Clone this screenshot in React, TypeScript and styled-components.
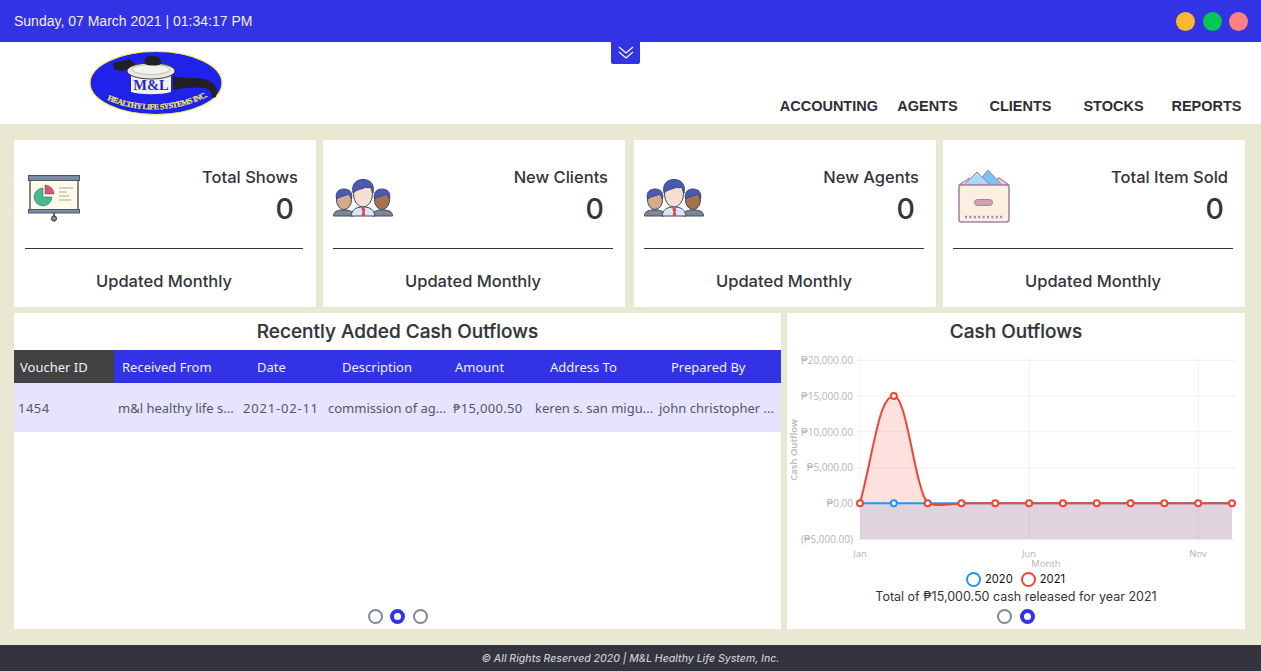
import styled, { createGlobalStyle } from 'styled-components';

const GlobalStyle = createGlobalStyle`
	html, body {
		margin: 0;
		padding: 0;
		background-color: #e9e9d3;
	}
	* {
		box-sizing: border-box;
	}
`;

const Page = styled.div`
	width: 1261px;
	height: 671px;
	display: flex;
	flex-direction: column;
	overflow: hidden;
	font-family: Inter, 'Liberation Sans', sans-serif;
	color: #33343d;
`;

const TopBar = styled.div`
	position: relative;
	height: 42px;
	flex: none;
	background-color: #3333e6;
	display: flex;
	align-items: center;
	justify-content: space-between;
	padding: 0 13px 0 14px;
`;

const Clock = styled.div`
	font-family: 'Liberation Sans', sans-serif;
	font-size: 14px;
	color: #f1efff;
`;

const Lights = styled.div`
	display: flex;
	gap: 7.5px;
`;

const Light = styled.span<{ $color: string }>`
	width: 19px;
	height: 19px;
	border-radius: 50%;
	background-color: ${(props) => props.$color};
`;

const Toggler = styled.button`
	position: absolute;
	left: 611px;
	top: 42px;
	width: 29px;
	height: 22px;
	border: 0;
	padding: 0;
	border-radius: 0 0 2px 2px;
	background-color: #3333e6;
	display: flex;
	align-items: center;
	justify-content: center;
`;

const Header = styled.header`
	height: 82px;
	flex: none;
	background-color: #fff;
	display: flex;
	justify-content: space-between;
	padding: 9px 8px 0 89px;
`;

const Nav = styled.nav`
	display: flex;
	align-items: center;
	height: 50px;
	margin-top: 30px;
`;

const NavItem = styled.a<{ $wide?: boolean }>`
	min-width: 93px;
	margin-right: ${(props) => (props.$wide ? '3px' : '0')};
	text-align: center;
	font-family: 'Liberation Sans', sans-serif;
	font-size: 14.5px;
	font-weight: 700;
	color: #2e2e36;
`;

const Main = styled.main`
	flex: 1;
	display: flex;
	flex-direction: column;
	gap: 6px;
	padding: 16px 16px 16px 14px;
`;

const CardRow = styled.div`
	display: flex;
	gap: 9px;
`;

const CardPair = styled.div`
	display: flex;
	gap: 7px;
`;

const Card = styled.section<{ $shifted?: boolean }>`
	width: 302px;
	height: 167px;
	background-color: #fff;
	display: flex;
	flex-direction: column;
	padding: ${(props) => (props.$shifted ? '0 13px 0 11px' : '0 12px 0 10px')};
`;

const CardTop = styled.div`
	height: 109px;
	display: flex;
	align-items: center;
	justify-content: space-between;
	border-bottom: 1px solid #33343d;
`;

const CardIcon = styled.div<{ $inset: number; $drop: number }>`
	display: flex;
	padding-left: ${(props) => props.$inset}px;
	padding-top: ${(props) => props.$drop}px;
`;

const CardStats = styled.div`
	padding: 9px 5px 0 0;
	text-align: right;
`;

const CardTitle = styled.div`
	font-size: 16.5px;
	font-weight: 500;
	line-height: 20px;
`;

const CardValue = styled.div`
	font-size: 28.5px;
	font-weight: 500;
	line-height: 43px;
	padding-right: 4px;
`;

const CardFooter = styled.div`
	flex: 1;
	display: flex;
	align-items: center;
	justify-content: center;
	padding-top: 6px;
	font-size: 16.5px;
	font-weight: 500;
`;

const PanelRow = styled.div`
	display: flex;
	gap: 6px;
`;

const Panel = styled.section<{ $width: number }>`
	position: relative;
	width: ${(props) => props.$width}px;
	height: 316px;
	background-color: #fff;
	display: flex;
	flex-direction: column;
`;

const PanelTitle = styled.h2`
	height: 37px;
	flex: none;
	margin: 0;
	display: flex;
	align-items: center;
	justify-content: center;
	font-size: 19px;
	font-weight: 500;
	-webkit-text-stroke: 0.2px #33343d;
`;

const TableGrid = styled.div`
	display: grid;
	grid-template-columns: 100px 125px 85px 125px 82px 124px 126px;
	font-family: 'Noto Sans', 'Open Sans', sans-serif;
	font-size: 13px;
`;

const HeadCell = styled.div<{ $indent: number; $dark?: boolean }>`
	height: 33px;
	display: flex;
	align-items: center;
	padding-left: ${(props) => props.$indent}px;
	background-color: ${(props) => (props.$dark ? '#424242' : '#3333e6')};
	color: #f1efff;
`;

const BodyCell = styled.div<{ $spacing: number }>`
	height: 49px;
	line-height: 50px;
	padding: 0 0 0 4px;
	background-color: #e6e3ff;
	color: #55556a;
	letter-spacing: ${(props) => props.$spacing}px;
	white-space: nowrap;
`;

const Pager = styled.div`
	margin-top: auto;
	height: 20px;
	flex: none;
	display: flex;
	justify-content: center;
	gap: 7.5px;
`;

const PagerDot = styled.span<{ $active?: boolean }>`
	width: 15px;
	height: 15px;
	border-radius: 50%;
	background-color: #fff;
	border: ${(props) => (props.$active ? '4px solid #3333e6' : '2px solid #808897')};
`;

const Legend = styled.div`
	height: 18px;
	flex: none;
	display: flex;
	justify-content: center;
	align-items: center;
	font-size: 11.2px;
	color: #111;
	padding-right: 9px;
`;

const LegendMark = styled.span<{ $color: string }>`
	width: 15px;
	height: 15px;
	margin: 0 4px 0 8px;
	border-radius: 50%;
	border: 2.4px solid ${(props) => props.$color};
`;

const ChartNote = styled.div`
	height: 17px;
	flex: none;
	text-align: center;
	font-size: 12.5px;
	line-height: 17px;
`;

const Footer = styled.footer`
	height: 26px;
	flex: none;
	background-color: #33343d;
	display: flex;
	align-items: center;
	justify-content: center;
	font-size: 10.5px;
	font-weight: 500;
	font-style: italic;
	color: #c9c9cc;
`;

const PeopleIcon = () => (
	<svg width="60" height="38" viewBox="0 0 60 38">
		<path d="M0.5 37c0-4 3-6 9-6h2c6 0 9 2 9 6z" fill="#7b8798" stroke="#444a5a" />
		<path d="M39.5 37c0-4 3-6 9-6h2c6 0 9 2 9 6z" fill="#7b8798" stroke="#444a5a" />
		<ellipse cx="11" cy="21" rx="7.5" ry="9.5" fill="#d2ab8b" stroke="#444a5a" />
		<ellipse cx="49" cy="21" rx="7.5" ry="9.5" fill="#a4724f" stroke="#444a5a" />
		<path d="M3.5 20C2 13 6 10 11 10s9 3 7.5 10c-1-2-2-4-3-5-3 2-8 2-12 5z" fill="#4a5ab0" stroke="#3c4580" />
		<path d="M41.5 20C40 13 44 10 49 10s9 3 7.5 10c-1-2-2-4-3-5-3 2-8 2-12 5z" fill="#4a5ab0" stroke="#3c4580" />
		<path d="M18 37c1-6 4-9 12-9s11 3 12 9z" fill="#d5e6f4" stroke="#444a5a" />
		<path d="M28.5 29h3l0.8 2.5-0.8 1 1 4.5h-4l1-4.5-0.8-1z" fill="#e0455a" />
		<ellipse cx="30" cy="15" rx="9.5" ry="13" fill="#f4dfd0" stroke="#444a5a" />
		<path d="M20 14C18 4 24 0.5 30 0.5S42 4 40 14c-1-3-2-5-3-6-1 1-3 1-4 0-3 2-9 2-13 6z" fill="#4a5ab0" stroke="#3c4580" />
	</svg>
);

const ScreenIcon = () => (
	<svg width="52" height="48" viewBox="0 0 52 48">
		<rect x="2" y="6" width="48" height="30" fill="#fdfbe8" stroke="#33343d" strokeWidth="1.2" />
		<rect x="0.5" y="1.5" width="51" height="5" fill="#7a8ba3" stroke="#4a5568" />
		<rect x="0.5" y="35.5" width="51" height="3.5" fill="#7a8ba3" stroke="#4a5568" />
		<path d="M26 39v4" stroke="#33343d" strokeWidth="1.4" />
		<circle cx="26" cy="44.5" r="2.6" fill="#7a8ba3" stroke="#33343d" />
		<path d="M15 14a9 9 0 1 0 9 9h-9z" fill="#48b98f" stroke="#33343d" strokeWidth="0.4" />
		<path d="M17 11v9h9a9 9 0 0 0-9-9z" fill="#e0517f" stroke="#33343d" strokeWidth="0.4" />
		<path d="M31 14h14M31 18h8M31 22h10M31 26h12" stroke="#a8a89c" strokeWidth="1" />
	</svg>
);

const BoxIcon = () => (
	<svg width="52" height="54" viewBox="0 0 52 54">
		<path d="M1 16l10-6.5 10 6.5h10l10-7 10 7z" fill="#efd9bd" stroke="#a683a8" strokeWidth="1.4" strokeLinejoin="round" />
		<path d="M6 16 19 3l13 13z" fill="#a5daf9" stroke="#a683a8" strokeWidth="1" />
		<path d="M24 8l6-7 14 15H33z" fill="#7cc4f0" stroke="#a683a8" strokeWidth="1" />
		<rect x="1" y="16" width="50" height="37" rx="2.5" fill="#fbefdf" stroke="#a683a8" strokeWidth="1.6" />
		<rect x="16.5" y="30.5" width="18" height="6" rx="3" fill="#cda5a9" stroke="#a683a8" />
		<path d="M7 48h39" stroke="#a683a8" strokeWidth="2.4" strokeDasharray="2 2.4" />
	</svg>
);

const Logo = () => (
	<svg width="134" height="64" viewBox="0 0 134 64">
		<defs>
			<path id="logo-arc" d="M18 49Q68 70 120 45" />
		</defs>
		<ellipse cx="67" cy="32" rx="66" ry="31.5" fill="#1f22ea" stroke="#f3ee52" strokeWidth="1.2" />
		<path d="M24 12l17-4 7 8-16 4-7-2z" fill="#202026" />
		<path d="M84 25c10 3 22 1 31 3 8 2 13 7 13 12l-1 6-4 1-1-6c-2-3-4-4-9-4-10-1-20 0-29 2z" fill="#202026" />
		<path d="M42 24h40v17c-10 3-30 3-40 0z" fill="#f3f3ee" />
		<ellipse cx="62" cy="20" rx="24" ry="8" fill="#e8e8df" stroke="#38383c" />
		<ellipse cx="62" cy="18.5" rx="19" ry="5" fill="#f3f3ee" stroke="#a0a09a" strokeWidth="0.6" />
		<path d="M56 13c-2-7 3-8 7-8s10 1 9 8c-3 2-12 2-16 0z" fill="#202026" />
		<text x="62" y="39" textAnchor="middle" fontFamily="'Liberation Serif', serif" fontWeight="700" fontSize="14.5" fill="#2327c8">M&amp;L</text>
		<text fontFamily="'Liberation Serif', serif" fontWeight="700" fontSize="8" fill="#f3ee52" stroke="#f3ee52" strokeWidth="0.2">
			<textPath href="#logo-arc" textLength="104">HEALTHY LIFE SYSTEMS INC.</textPath>
		</text>
	</svg>
);

const chartLeft = 73;
const pointStep = 33.82;
const zeroY = 153.3;
const yLabels = ['₱20,000.00', '₱15,000.00', '₱10,000.00', '₱5,000.00', '₱0.00', '(₱5,000.00)'];
const monthPoints = Array.from({ length: 12 }, (_, i) => chartLeft + i * pointStep);
const curve = `M73 ${zeroY}C87 100 92 46 107 46C120 46 128 140 141 ${zeroY}C148 156 158 155 175 ${zeroY}L445 ${zeroY}`;

const OutflowChart = () => (
	<svg width="458" height="220" viewBox="0 0 458 220">
		<g stroke="#f1f1f1" strokeWidth="1">
			{yLabels.map((_, i) => (
				<line key={i} x1="69" x2="449" y1={10.3 + i * 35.8} y2={10.3 + i * 35.8} />
			))}
			<line x1="73" x2="73" y1="7" y2="192" />
			<line x1="242.2" x2="242.2" y1="7" y2="192" />
			<line x1="411.3" x2="411.3" y1="7" y2="192" />
		</g>
		<g fontFamily="'Open Sans', sans-serif" fontSize="10" fill="#b5b5b5">
			{yLabels.map((label, i) => (
				<text key={label} x="66" y={14 + i * 35.8} textAnchor="end">{label}</text>
			))}
			<text x="73" y="207" textAnchor="middle" fontSize="9.5">Jan</text>
			<text x="242" y="207" textAnchor="middle" fontSize="9.5">Jun</text>
			<text x="411" y="207" textAnchor="middle" fontSize="9.5">Nov</text>
			<text x="259" y="217" textAnchor="middle" fontSize="9.5">Month</text>
			<text transform="translate(10 100) rotate(-90)" textAnchor="middle" fontSize="9.5" fontWeight="600">Cash Outflow</text>
		</g>
		<rect x="73" y={zeroY} width="372" height="36" fill="#2196f3" fillOpacity="0.15" />
		<path d={`${curve}L445 189L73 189Z`} fill="#f44336" fillOpacity="0.16" />
		<line x1="73" x2="445" y1={zeroY} y2={zeroY} stroke="#2196f3" strokeWidth="2" />
		<circle cx={chartLeft + pointStep} cy={zeroY} r="3" fill="#fff" stroke="#2196f3" strokeWidth="2" />
		<path d={curve} fill="none" stroke="#f44336" strokeWidth="2" />
		{monthPoints.map((x, i) => (
			<circle key={x} cx={x} cy={i === 1 ? 46 : zeroY} r="3" fill="#fff" stroke="#f44336" strokeWidth="2" />
		))}
	</svg>
);

const stats = [
	{ title: 'Total Shows', icon: <ScreenIcon />, inset: 3, drop: 8, shifted: true },
	{ title: 'New Clients', icon: <PeopleIcon />, inset: 0, drop: 8, shifted: false },
	{ title: 'New Agents', icon: <PeopleIcon />, inset: 0, drop: 8, shifted: false },
	{ title: 'Total Item Sold', icon: <BoxIcon />, inset: 5, drop: 4, shifted: false },
];

const columns = [
	{ name: 'Voucher ID', indent: 6, value: '1454', spacing: 0.5 },
	{ name: 'Received From', indent: 8, value: 'm&l healthy life s...', spacing: 0 },
	{ name: 'Date', indent: 18, value: '2021-02-11', spacing: 0.8 },
	{ name: 'Description', indent: 18, value: 'commission of ag...', spacing: 0 },
	{ name: 'Amount', indent: 6, value: '₱15,000.50', spacing: 0.3 },
	{ name: 'Address To', indent: 19, value: 'keren s. san migu...', spacing: 0 },
	{ name: 'Prepared By', indent: 16, value: 'john christopher ...', spacing: 0 },
];

function StatCard({ stat }: { stat: (typeof stats)[number] }) {
	return (
		<Card $shifted={stat.shifted}>
			<CardTop>
				<CardIcon $inset={stat.inset} $drop={stat.drop}>{stat.icon}</CardIcon>
				<CardStats>
					<CardTitle>{stat.title}</CardTitle>
					<CardValue>0</CardValue>
				</CardStats>
			</CardTop>
			<CardFooter>Updated Monthly</CardFooter>
		</Card>
	);
}

function App() {
	return (
		<Page>
			<GlobalStyle />
			<TopBar>
				<Clock>Sunday, 07 March 2021 | 01:34:17 PM</Clock>
				<Lights>
					<Light $color="#fdb92d" />
					<Light $color="#00c853" />
					<Light $color="#ff8080" />
				</Lights>
				<Toggler aria-label="Collapse">
					<svg width="16" height="14" viewBox="0 0 16 14" fill="none" stroke="#fff" strokeWidth="1.2">
						<path d="M1 1l7 6 7-6M1 6l7 6 7-6" />
					</svg>
				</Toggler>
			</TopBar>
			<Header>
				<Logo />
				<Nav>
					<NavItem $wide>ACCOUNTING</NavItem>
					<NavItem>AGENTS</NavItem>
					<NavItem>CLIENTS</NavItem>
					<NavItem>STOCKS</NavItem>
					<NavItem>REPORTS</NavItem>
				</Nav>
			</Header>
			<Main>
				<CardRow>
					<CardPair>
						<StatCard stat={stats[0]} />
						<StatCard stat={stats[1]} />
					</CardPair>
					<CardPair>
						<StatCard stat={stats[2]} />
						<StatCard stat={stats[3]} />
					</CardPair>
				</CardRow>
				<PanelRow>
					<Panel $width={767}>
						<PanelTitle>Recently Added Cash Outflows</PanelTitle>
						<TableGrid>
							{columns.map((col, i) => (
								<HeadCell key={col.name} $indent={col.indent} $dark={i === 0}>
									{col.name}
								</HeadCell>
							))}
							{columns.map((col) => (
								<BodyCell key={col.name} $spacing={col.spacing}>{col.value}</BodyCell>
							))}
						</TableGrid>
						<Pager>
							<PagerDot />
							<PagerDot $active />
							<PagerDot />
						</Pager>
					</Panel>
					<Panel $width={458}>
						<PanelTitle>Cash Outflows</PanelTitle>
						<OutflowChart />
						<Legend>
							<LegendMark $color="#2196f3" />
							2020
							<LegendMark $color="#f44336" />
							2021
						</Legend>
						<ChartNote>Total of ₱15,000.50 cash released for year 2021</ChartNote>
						<Pager>
							<PagerDot />
							<PagerDot $active />
						</Pager>
					</Panel>
				</PanelRow>
			</Main>
			<Footer>© All Rights Reserved 2020 | M&amp;L Healthy Life System, Inc.</Footer>
		</Page>
	);
}

export default App;
